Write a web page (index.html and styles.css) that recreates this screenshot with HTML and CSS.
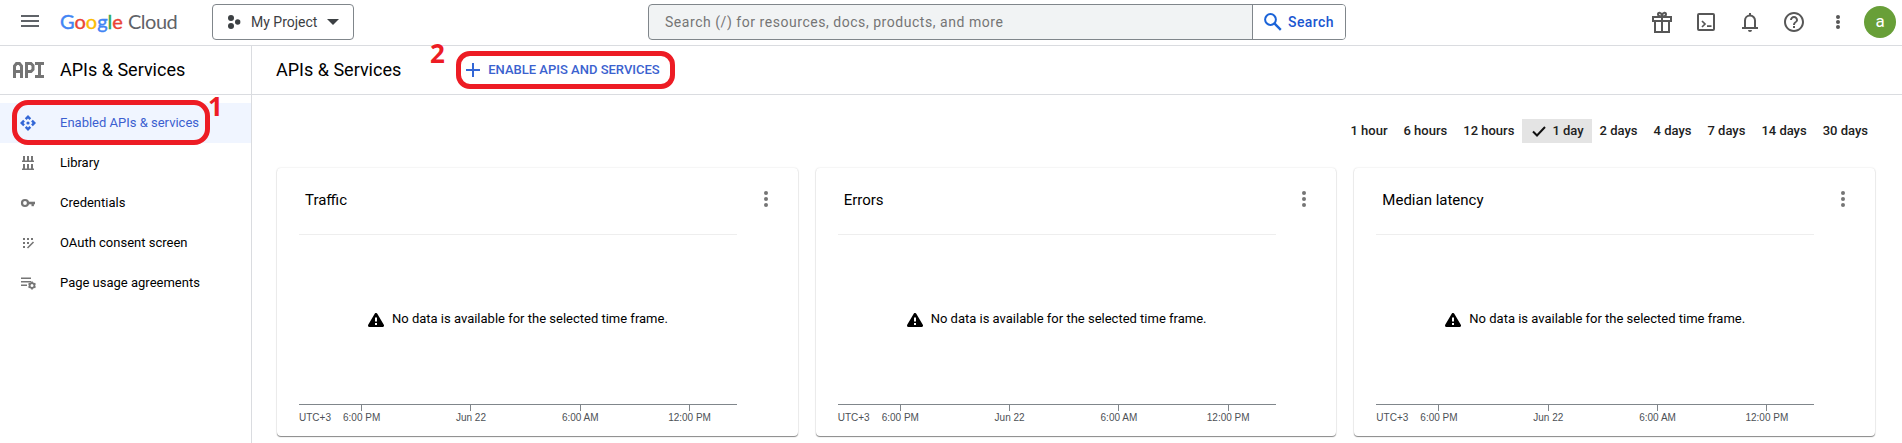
FILE: index.html
```html
<!DOCTYPE html>
<html lang="en">
<head>
<meta charset="utf-8">
<title>APIs &amp; Services</title>
<link rel="stylesheet" href="styles.css">
</head>
<body>
<header class="topbar">
  <svg class="menu" width="18" height="12" viewBox="0 0 18 12" fill="#5f6368"><path d="M0 0h18v2H0zM0 5h18v2H0zM0 10h18v2H0z"/></svg>
  <div class="logo"><span class="google"><span class="g-blue">G</span><span class="g-red">o</span><span class="g-yellow">o</span><span class="g-blue">g</span><span class="g-green">l</span><span class="g-red">e</span></span><span class="cloud">Cloud</span></div>
  <button class="project">
    <svg width="14" height="14" viewBox="0 0 14 14" fill="#3c4043"><circle cx="4" cy="3" r="3"/><circle cx="10.7" cy="7" r="2.7"/><circle cx="4" cy="11" r="3"/></svg>
    <span class="project-name">My Project</span>
    <svg width="12" height="6" viewBox="0 0 12 6" fill="#3c4043"><path d="M0 0h12L6 6z"/></svg>
  </button>
  <div class="search">
    <span class="search-hint">Search (/) for resources, docs, products, and more</span>
    <span class="search-btn">
      <svg width="18" height="18" viewBox="0 0 18 18" fill="none" stroke="#1a63d8" stroke-width="2"><circle cx="6.5" cy="6.5" r="5.4"/><path d="M10.4 10.4l6.400 6.400" stroke-width="2.4"/></svg>
      <span class="search-label">Search</span>
    </span>
  </div>
  <div class="tools">
    <svg width="20" height="22" viewBox="0 0 20 22" fill="none" stroke="#575757" stroke-width="2"><path d="M1 6h18v4H1zM3 10v11h14V10M10 6v15M10 5.500C8 5.500 6 5 6 3.200S9 1 10 4.500C11 1 14 1.400 14 3.200S12 5.500 10 5.500z"/></svg>
    <svg width="20" height="18" viewBox="-1 0 20 18" fill="none" stroke="#575757" stroke-width="2"><rect x="1" y="1" width="16" height="16" rx="1"/><path d="M5 8l3 3-3 3M10 13.200h4.500" stroke-width="1.700"/></svg>
    <svg width="20" height="20" viewBox="-2 0 20 20" fill="none" stroke="#575757" stroke-width="2"><path d="M3 16V8.500a5 5 0 0 1 10 0V16M0 16h16M8 1v2"/><path d="M6 18h4a2 2 0 0 1-4 0z" fill="#575757" stroke="none"/></svg>
    <svg width="20" height="20" viewBox="0 0 20 20" fill="#575757"><path d="M9 16h2v-2H9v2zm1-16C4.480 0 0 4.480 0 10s4.480 10 10 10 10-4.480 10-10S15.520 0 10 0zm0 18c-4.410 0-8-3.590-8-8s3.590-8 8-8 8 3.590 8 8-3.590 8-8 8zm0-14C7.790 4 6 5.790 6 8h2c0-1.100.9-2 2-2s2 .9 2 2c0 2-3 1.750-3 5h2c0-2.250 3-2.500 3-5 0-2.210-1.790-4-4-4z"/></svg>
    <svg width="20" height="14" viewBox="-8 0 20 14" fill="#575757"><circle cx="2" cy="2" r="2"/><circle cx="2" cy="7" r="2"/><circle cx="2" cy="12" r="2"/></svg>
    <span class="avatar">a</span>
  </div>
</header>
<div class="body">
  <nav class="sidebar">
    <div class="side-head">
      <svg width="31" height="16" viewBox="0 0 31 16" fill="none" stroke="#757575" stroke-width="3"><path d="M1.500 16V4l2-2.500h3L8.500 4v12M1.500 9.500h7M13.500 16V1.500h4.500l2 2v4l-2 2h-4.500M22 1.500h9M22 14.500h9M26.500 1.500v13"/></svg>
      <span class="title">APIs &amp; Services</span>
    </div>
    <ul class="nav">
      <li class="item active"><svg width="16" height="16" viewBox="0 0 16 16" fill="#3367d6"><path d="M8 0l3.200 3.200-1.700 1.700L8 3.500 6.500 4.900 4.800 3.200zM8 16l3.200-3.200-1.700-1.700L8 12.500l-1.500-1.400-1.700 1.700zM0 8l3.200-3.200 1.700 1.700L3.500 8l1.400 1.500-1.700 1.700zM16 8l-3.200-3.200-1.700 1.700L12.500 8l-1.400 1.500 1.700 1.700z"/><circle cx="8" cy="8" r="1.600"/></svg><span>Enabled APIs &amp; services</span></li>
      <li class="item"><svg width="16" height="16" viewBox="0 0 16 16" fill="#757575"><path d="M3 1h2v5H3zM7 1h2v5H7zM11 1h2v5h-2zM2 5.500h12V7H2zM3 9h2v5H3zM7 9h2v5H7zM11 9h2v5h-2zM2 13.500h12V15H2z"/></svg><span>Library</span></li>
      <li class="item"><svg width="16" height="16" viewBox="0 0 16 16" fill="none" stroke="#757575" stroke-width="2.200"><circle cx="5" cy="8" r="3"/><path d="M8 8h7" stroke-width="2.600"/><path d="M12.700 8v3.200" stroke-width="2.400"/></svg><span>Credentials</span></li>
      <li class="item"><svg width="16" height="16" viewBox="0 0 16 16" fill="#757575"><path d="M3 3h2v2H3zM7 3h2v2H7zM11 3h2v2h-2zM3 7h2v2H3zM7 7h2v2H7zM3 11h2v2H3z"/><path d="M7.500 13l6-6" stroke="#757575" stroke-width="1.600"/></svg><span>OAuth consent screen</span></li>
      <li class="item"><svg width="16" height="16" viewBox="0 0 16 16" fill="#757575"><path d="M1 2.500h10V4H1zM1 6h10v1.500H1zM1 9.500h6V11H1z"/><circle cx="12" cy="10.500" r="2.400" fill="none" stroke="#757575" stroke-width="1.800"/><path d="M12 6.500v1.500M12 13v1.500M8.500 8.500l1.300.8M14.200 11.700l1.300.8M8.500 12.500l1.300-.8M14.200 9.300l1.300-.8" stroke="#757575" stroke-width="1.800"/></svg><span>Page usage agreements</span></li>
    </ul>
  </nav>
  <main class="main">
    <div class="main-head">
      <span class="title">APIs &amp; Services</span>
      <span class="enable"><svg width="14" height="14" viewBox="0 0 14 14" fill="#3367d6"><path d="M6 0h2v6h6v2H8v6H6V8H0V6h6z"/></svg><span class="enable-label">ENABLE APIS AND SERVICES</span></span>
    </div>
    <div class="ranges">
      <span>1 hour</span><span>6 hours</span><span>12 hours</span><span class="selected"><svg width="14" height="11" viewBox="0 0 14 11" fill="none" stroke="#111" stroke-width="2"><path d="M1 5.500l4 4L13 1"/></svg>1 day</span><span>2 days</span><span>4 days</span><span>7 days</span><span>14 days</span><span>30 days</span>
    </div>
    <div class="cards">
      <section class="card">
        <div class="card-head"><h2>Traffic</h2><svg class="kebab" width="4" height="16" viewBox="0 0 4 16" fill="#757575"><circle cx="2" cy="2" r="2"/><circle cx="2" cy="8" r="2"/><circle cx="2" cy="14" r="2"/></svg></div>
        <div class="plot"><svg width="16" height="14" viewBox="0 0 16 14"><path d="M8 1.500L14.500 12.500h-13z" stroke="#000" stroke-width="3" stroke-linejoin="round"/><path d="M7 4.500h2v4H7zM7 10h2v2H7z" fill="#fff"/></svg><span>No data is available for the selected time frame.</span></div>
        <div class="axis"><span class="zone">UTC+3</span><span class="tick">6:00 PM</span><span class="tick">Jun 22</span><span class="tick">6:00 AM</span><span class="tick">12:00 PM</span></div>
      </section>
      <section class="card">
        <div class="card-head"><h2>Errors</h2><svg class="kebab" width="4" height="16" viewBox="0 0 4 16" fill="#757575"><circle cx="2" cy="2" r="2"/><circle cx="2" cy="8" r="2"/><circle cx="2" cy="14" r="2"/></svg></div>
        <div class="plot"><svg width="16" height="14" viewBox="0 0 16 14"><path d="M8 1.500L14.500 12.500h-13z" stroke="#000" stroke-width="3" stroke-linejoin="round"/><path d="M7 4.500h2v4H7zM7 10h2v2H7z" fill="#fff"/></svg><span>No data is available for the selected time frame.</span></div>
        <div class="axis"><span class="zone">UTC+3</span><span class="tick">6:00 PM</span><span class="tick">Jun 22</span><span class="tick">6:00 AM</span><span class="tick">12:00 PM</span></div>
      </section>
      <section class="card">
        <div class="card-head"><h2>Median latency</h2><svg class="kebab" width="4" height="16" viewBox="0 0 4 16" fill="#757575"><circle cx="2" cy="2" r="2"/><circle cx="2" cy="8" r="2"/><circle cx="2" cy="14" r="2"/></svg></div>
        <div class="plot"><svg width="16" height="14" viewBox="0 0 16 14"><path d="M8 1.500L14.500 12.500h-13z" stroke="#000" stroke-width="3" stroke-linejoin="round"/><path d="M7 4.500h2v4H7zM7 10h2v2H7z" fill="#fff"/></svg><span>No data is available for the selected time frame.</span></div>
        <div class="axis"><span class="zone">UTC+3</span><span class="tick">6:00 PM</span><span class="tick">Jun 22</span><span class="tick">6:00 AM</span><span class="tick">12:00 PM</span></div>
      </section>
    </div>
  </main>
</div>
<div class="mark mark-one"><span class="mark-num">1</span></div>
<div class="mark mark-two"><span class="mark-num">2</span></div>
</body>
</html>
```
FILE: styles.css
```css
* { box-sizing: border-box; }
body { margin: 0; width: 1902px; height: 443px; overflow: hidden; position: relative; background: #fff; color: #000; font-family: Roboto, "Liberation Sans", sans-serif; font-size: 13px; display: flex; flex-direction: column; }
svg { display: block; flex: none; }
.topbar { height: 46px; flex: none; border-bottom: 1px solid #dadce0; display: flex; align-items: flex-start; }
.menu { margin: 15px 0 0 21px; }
.logo { margin: 8px 0 0 21px; width: 118px; flex: none; display: flex; font: 20px/26px Lato, Roboto, sans-serif; white-space: nowrap; }
.google { width: 68px; flex: none; -webkit-text-stroke: 0.4px; }
.g-blue { color: #4285f4; }
.g-red { color: #ea4335; }
.g-yellow { color: #fbbc04; }
.g-green { color: #34a853; }
.cloud { color: #5f6368; letter-spacing: -0.5px; }
.project { margin: 4px 0 0 34px; width: 142px; height: 36px; flex: none; border: 1px solid #80868b; border-radius: 4px; background: #fff; padding: 0 14px; display: flex; align-items: center; font: 14px/20px Roboto, sans-serif; color: #3c4043; }
.project-name { flex: 1; text-align: left; margin-left: 10px; padding-bottom: 1px; white-space: nowrap; }
.search { margin: 4px 0 0 294px; width: 698px; height: 36px; flex: none; border: 1px solid #80868b; border-radius: 4px; background: #f1f3f4; display: flex; overflow: hidden; }
.search-hint { flex: 1; padding-left: 16px; font-size: 14px; line-height: 34px; letter-spacing: 0.54px; color: #757575; }
.search-btn { width: 93px; border-left: 1px solid #80868b; background: #fff; display: flex; align-items: center; padding-left: 11px; gap: 6px; }
.search-label { font-size: 14px; font-weight: 500; color: #1a56d0; letter-spacing: 0.4px; }
.tools { flex: 1; height: 43px; padding-right: 6px; display: flex; align-items: center; justify-content: flex-end; gap: 24px; }
.avatar { width: 32px; height: 32px; margin-left: -8px; border-radius: 50%; background: #689f38; color: #fff; font-size: 17px; line-height: 31px; text-align: center; }
.body { flex: 1; display: flex; min-height: 0; }
.sidebar { width: 252px; border-right: 1px solid #dadce0; }
.side-head { height: 49px; border-bottom: 1px solid #dadce0; display: flex; align-items: center; padding-left: 13px; gap: 16px; }
.title { font-size: 18px; line-height: 24px; }
.nav { list-style: none; margin: 8px 0 0; padding: 0; }
.item { height: 40px; padding-left: 20px; display: flex; align-items: center; gap: 24px; }
.item span { padding-bottom: 2px; }
.active { background: #f0f5ff; color: #3b5fd0; }
.main { flex: 1; }
.main-head { height: 49px; border-bottom: 1px solid #dadce0; display: flex; align-items: center; padding-left: 24px; }
.enable { margin-left: 65px; display: flex; align-items: center; gap: 8px; }
.enable-label { font-weight: 500; color: #3b62cf; padding-bottom: 1px; }
.ranges { height: 24px; margin: 24px 34px 0 0; display: flex; justify-content: flex-end; gap: 16px; line-height: 24px; font-weight: 500; color: #212121; }
.selected { margin: 0 -8px; padding: 0 8px 0 10px; background: #e4e4e4; display: flex; align-items: center; gap: 6px; }
.cards { margin: 25px 27px 0 25px; display: grid; grid-template-columns: repeat(3, 1fr); gap: 18px; }
.card { height: 268px; border-radius: 4px; padding: 0 22px; box-shadow: 0 0 2px rgba(0,0,0,.14), 0 1px 1px rgba(0,0,0,.45); }
.card-head { height: 66px; padding: 0 8px 2px 6px; display: flex; align-items: center; justify-content: space-between; }
.card-head h2 { margin: 0; font-size: 15px; font-weight: 400; line-height: 24px; }
.kebab { margin-top: -2px; }
.plot { width: 438px; height: 171px; border-top: 1px solid #eee; border-bottom: 1px solid #80868b; display: flex; align-items: center; gap: 8px; padding-left: 69px; white-space: nowrap; }
.plot span { padding-bottom: 2px; }
.axis { width: 438px; display: grid; grid-template-columns: 8px repeat(4, 109.3px); font: 10px/13px "Liberation Sans", Arial, sans-serif; color: #4d5156; }
.zone { padding-top: 6px; white-space: nowrap; }
.tick { display: flex; flex-direction: column; align-items: center; white-space: nowrap; }
.tick::before { content: ""; width: 1px; height: 6px; background: #80868b; }
.mark { position: absolute; border: 5px solid #ed1c24; }
.mark-one { left: 12px; top: 100px; width: 198px; height: 45px; border-radius: 16px; }
.mark-two { left: 456px; top: 51px; width: 219px; height: 38px; border-radius: 14px; }
.mark-num { position: absolute; font: bold 26px/26px "Open Sans", sans-serif; color: #ed1c24; }
.mark-one .mark-num { left: 191px; top: -12px; }
.mark-two .mark-num { left: -31px; top: -16px; }
```
